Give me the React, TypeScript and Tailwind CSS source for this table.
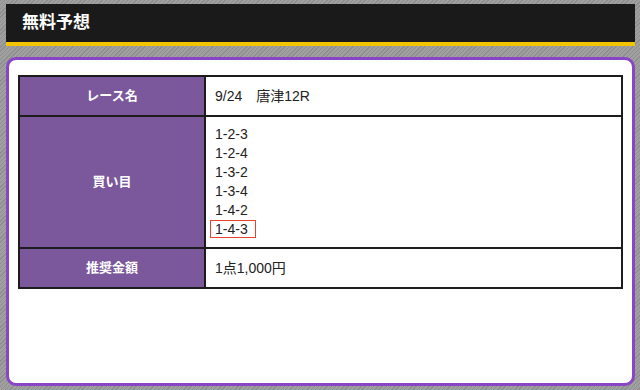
import React from 'react';

const bets = ['1-2-3', '1-2-4', '1-3-2', '1-3-4', '1-4-2', '1-4-3'];
const highlighted = '1-4-3';

const Label: React.FC<{ children: React.ReactNode }> = ({ children }) => (
    <th className="w-[186px] border-2 border-[#1c1c1c] bg-[#7b579c] text-center align-middle text-[13px] font-bold text-white">
        {children}
    </th>
);

const App: React.FC = () => {
    return (
        <div
            className="min-h-[390px] bg-[repeating-linear-gradient(135deg,#8e8e8e_0px,#8e8e8e_1px,#a0a0a0_1px,#a0a0a0_3px)] pt-[4px] pb-[4px] pl-[6px] pr-[5px]"
            style={{ fontFamily: '"Liberation Sans", "Noto Sans CJK JP", sans-serif' }}
        >
            {/* title bar */}
            <div className="flex h-[42px] items-center border-b-[4px] border-[#f2c500] bg-[#1a1a1a] px-[16px]">
                <h1 className="text-[17px] font-bold text-white">無料予想</h1>
            </div>

            {/* forecast card */}
            <div className="mt-[11px] h-[329px] rounded-[10px] border-[3px] border-[#8a45c6] bg-white px-[9px] pt-[15px]">
                <table className="w-full border-collapse border-2 border-[#1c1c1c] text-[14px] text-[#222]">
                    <tbody>
                        <tr className="h-[40px]">
                            <Label>レース名</Label>
                            <td className="border-2 border-[#1c1c1c] px-[9px] align-middle">9/24　唐津12R</td>
                        </tr>
                        <tr className="h-[132px]">
                            <Label>買い目</Label>
                            <td className="border-2 border-[#1c1c1c] px-[9px] py-[8px] align-middle">
                                {bets.map((b) => (
                                    <div key={b} className="leading-[19px]">
                                        {b === highlighted ? (
                                            <span className="-ml-[5px] inline-block border border-[#e8442c] pl-[4px] pr-[7px] leading-[16px]">
                                                {b}
                                            </span>
                                        ) : (
                                            b
                                        )}
                                    </div>
                                ))}
                            </td>
                        </tr>
                        <tr className="h-[40px]">
                            <Label>推奨金額</Label>
                            <td className="border-2 border-[#1c1c1c] px-[9px] align-middle">1点1,000円</td>
                        </tr>
                    </tbody>
                </table>
            </div>
        </div>
    );
};

export default App;
